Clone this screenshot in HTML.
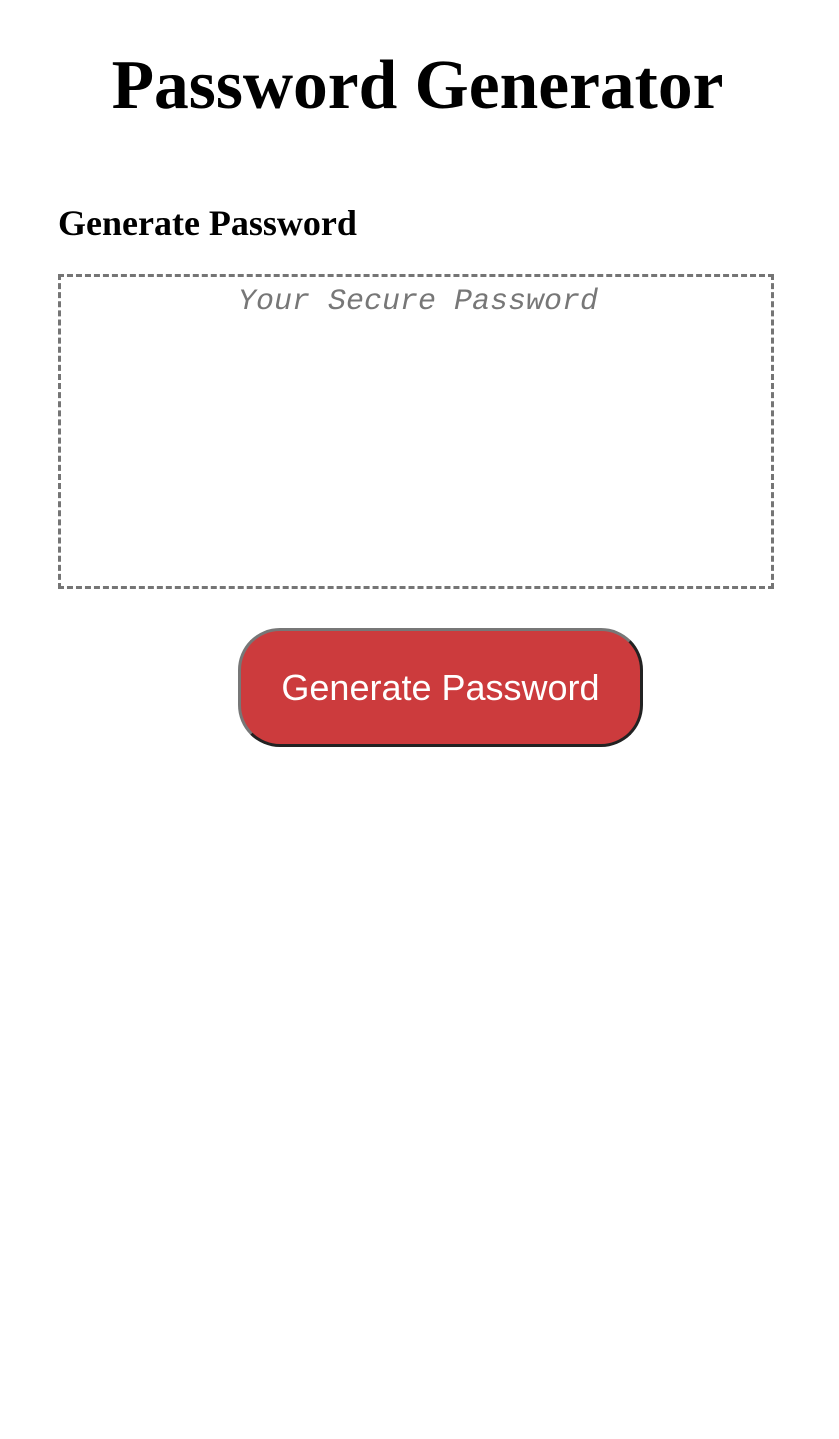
<!DOCTYPE html>
<html><head><meta charset="utf-8"><style>
html,body{margin:0;padding:0;background:#fff;width:839px;height:1439px;overflow:hidden}
h1{font-family:"Liberation Serif",serif;font-weight:bold;font-size:69.5px;text-align:center;margin:0;position:absolute;top:46px;left:-2px;width:839px;line-height:80px}
h2{font-family:"Liberation Serif",serif;font-weight:bold;font-size:36px;margin:0;position:absolute;left:58px;top:202px;line-height:42px}
.ta{position:absolute;left:58px;top:274px;width:710px;height:309px;border:3px dashed #757575;box-sizing:content-box}
.ph{position:absolute;top:8px;left:2px;width:100%;text-align:center;font-family:"Liberation Mono",monospace;font-style:italic;font-size:30px;color:#777;line-height:34px}
.btn{position:absolute;left:238px;top:628px;width:399px;height:113px;border:3px solid;border-color:#777 #222 #222 #777;border-radius:42px;background:#cc3b3d;color:#fff;font-family:"Liberation Sans",sans-serif;font-size:36px;text-align:center;line-height:113px}
</style></head><body>
<h1>Password Generator</h1>
<h2>Generate Password</h2>
<div class="ta"><div class="ph">Your Secure Password</div></div>
<div class="btn">Generate Password</div>
</body></html>
